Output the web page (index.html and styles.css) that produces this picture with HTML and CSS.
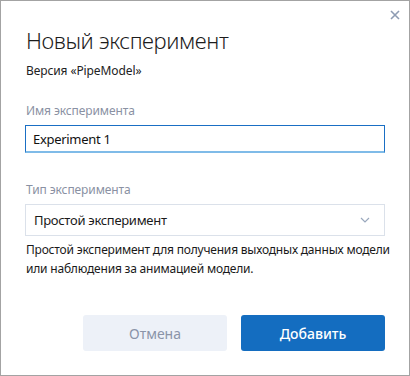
FILE: index.html
```html
<!DOCTYPE html>
<html lang="ru">
<head>
  <meta charset="UTF-8" />
  <meta name="viewport" content="width=device-width, initial-scale=1" />
  <title>Новый эксперимент</title>
  <link rel="stylesheet" href="styles.css">
</head>
<body>

  <div class="dialog">
    <div class="dialog-top">
      <button class="close-btn" type="button" aria-label="Закрыть">
        <svg width="10" height="10" viewBox="0 0 10 10">
          <path d="M1 1 L9 9 M9 1 L1 9" stroke="#8e9cb3" stroke-width="1.6" fill="none" />
        </svg>
      </button>
    </div>

    <h1 class="dialog-title">Новый эксперимент</h1>
    <div class="dialog-sub">Версия «PipeModel»</div>

    <div class="form-field">
      <label for="expName">Имя эксперимента</label>
      <input type="text" id="expName" class="text-input" value="Experiment 1">
    </div>

    <div class="form-field form-field-type">
      <label>Тип эксперимента</label>
      <div class="select-box">
        <span>Простой эксперимент</span>
        <svg width="10" height="6" viewBox="0 0 10 6">
          <path d="M1 1 L5 5 L9 1" stroke="#9aa8bd" stroke-width="1.2" fill="none" />
        </svg>
      </div>
    </div>

    <p class="type-hint">Простой эксперимент для получения выходных данных модели<br>или наблюдения за анимацией модели.</p>

    <div class="actions">
      <button class="btn btn-cancel" type="button">Отмена</button>
      <button class="btn btn-add" type="button">Добавить</button>
    </div>
  </div>

</body>
</html>
```

FILE: styles.css
```css
body {
  margin: 0;
  font-family: 'Noto Sans', sans-serif;
  background: #fff;
  color: #222;
}

.dialog {
  width: 410px;
  height: 376px;
  box-sizing: border-box;
  border: 1px solid #a3a3a3;
  padding: 0 24px 24px 24px;
  display: flex;
  flex-direction: column;
}

.dialog-top {
  display: flex;
  justify-content: flex-end;
  margin-right: -17px;
  padding-top: 7px;
  height: 18px;
}

.close-btn {
  border: none;
  background: none;
  padding: 0;
  width: 14px;
  height: 14px;
  display: flex;
  align-items: center;
  justify-content: center;
  cursor: pointer;
}

.dialog-title {
  margin: 0;
  font-size: 22px;
  line-height: 28px;
  font-weight: 300;
  letter-spacing: -0.4px;
  color: #1c1c1c;
  padding-left: 1px;
}

.dialog-sub {
  margin-top: 8px;
  font-size: 12px;
  line-height: 18px;
  letter-spacing: -0.1px;
  padding-left: 1px;
}

.form-field {
  margin-top: 22px;
}

.form-field label {
  display: block;
  font-size: 12px;
  line-height: 18px;
  letter-spacing: -0.1px;
  color: #8a91a3;
  margin-bottom: 5px;
  padding-left: 1px;
}

.form-field-type {
  margin-top: 28px;
}

.text-input {
  display: block;
  width: 100%;
  height: 28px;
  box-sizing: border-box;
  border: 1px solid #1a6fc4;
  border-bottom: 2px solid #7fbbe8;
  padding: 0 7px;
  font-size: 13px;
  letter-spacing: -0.3px;
  font-family: 'Noto Sans', sans-serif;
  color: #111;
  outline: none;
}

.select-box {
  height: 32px;
  box-sizing: border-box;
  border: 1px solid #dbe1ea;
  padding: 0 14px 0 8px;
  display: flex;
  align-items: center;
  justify-content: space-between;
  font-size: 13px;
  letter-spacing: -0.3px;
  color: #1a1a1a;
}

.type-hint {
  margin: 4px -14px 0 0;
  font-size: 12px;
  line-height: 19px;
  letter-spacing: -0.2px;
  white-space: nowrap;
  color: #1a1a1a;
  padding-left: 1px;
}

.actions {
  margin-top: auto;
  display: flex;
  justify-content: flex-end;
  gap: 14px;
}

.btn {
  width: 144px;
  height: 36px;
  border: none;
  border-radius: 3px;
  font-family: 'Noto Sans', sans-serif;
  font-size: 14px;
  cursor: pointer;
}

.btn-cancel {
  background: #edf1f8;
  color: #8a94a8;
}

.btn-add {
  background: #146dc0;
  color: #fff;
  font-weight: 500;
}
```
